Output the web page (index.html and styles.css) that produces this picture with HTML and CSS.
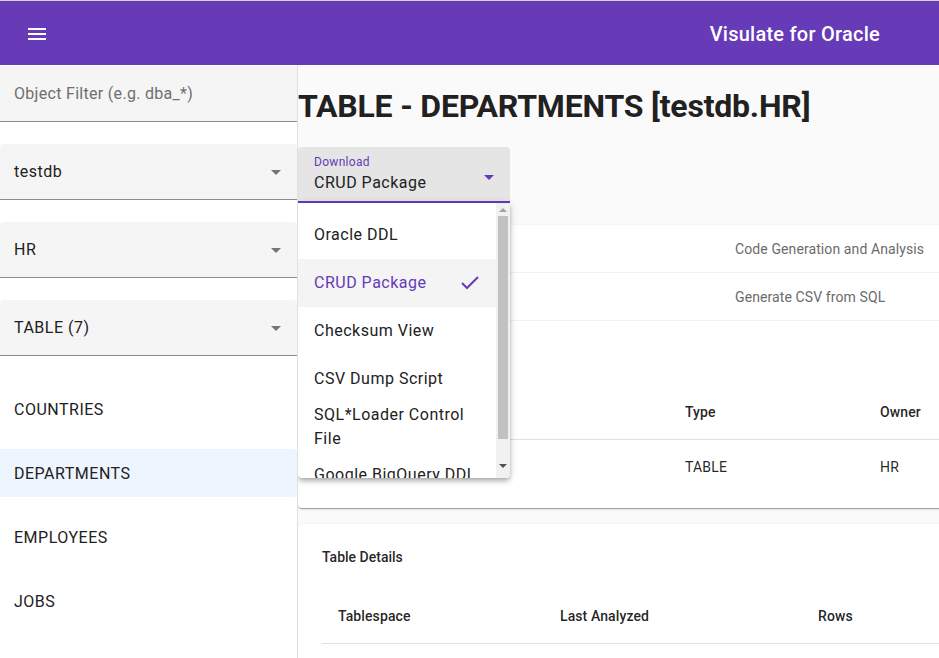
FILE: index.html
```html
<!DOCTYPE html>
<html>
<head>
<meta charset="utf-8">
<link rel="stylesheet" href="styles.css">
</head>
<body>
<div class="app">
  <header class="toolbar">
    <span class="menu-btn">
      <svg width="24" height="24" viewBox="0 0 24 24"><path fill="#fff" d="M3 18h18v-2H3v2zm0-5h18v-2H3v2zm0-7v2h18V6H3z"/></svg>
    </span>
    <span class="spacer"></span>
    <span class="app-title">Visulate for Oracle</span>
  </header>
  <div class="content">
    <aside class="sidebar">
      <div class="filter"><span class="placeholder">Object Filter (e.g. dba_*)</span></div>
      <div class="select"><span>testdb</span><span class="arrow"></span></div>
      <div class="select"><span>HR</span><span class="arrow"></span></div>
      <div class="select"><span>TABLE (7)</span><span class="arrow"></span></div>
      <ul class="nav">
        <li>COUNTRIES</li>
        <li class="active">DEPARTMENTS</li>
        <li>EMPLOYEES</li>
        <li>JOBS</li>
      </ul>
    </aside>
    <main class="main">
      <h1 class="title">TABLE - DEPARTMENTS [testdb.HR]</h1>
      <div class="download">
        <div class="dl-label">Download</div>
        <div class="dl-value"><span>CRUD Package</span><span class="arrow purple"></span></div>
      </div>

      <section class="card card-one">
        <div class="opt-row"><span class="opt-desc">Code Generation and Analysis</span></div>
        <div class="opt-row"><span class="opt-desc">Generate CSV from SQL</span></div>
        <div class="tbl tbl-one">
          <div class="th"></div><div class="th">Type</div><div class="th">Owner</div>
          <div class="td"></div><div class="td">TABLE</div><div class="td">HR</div>
        </div>
      </section>

      <section class="card card-two">
        <div class="card-title">Table Details</div>
        <div class="tbl tbl-two">
          <div class="th">Tablespace</div><div class="th">Last Analyzed</div><div class="th">Rows</div>
        </div>
      </section>

      <div class="panel">
        <ul class="options">
          <li>Oracle DDL</li>
          <li class="selected"><span>CRUD Package</span>
            <svg class="check" width="20" height="16" viewBox="0 0 20 16"><polyline points="2,8 7,13 18,2" fill="none" stroke="#673ab7" stroke-width="2"/></svg>
          </li>
          <li>Checksum View</li>
          <li>CSV Dump Script</li>
          <li class="multi">SQL*Loader Control File</li>
          <li>Google BigQuery DDL</li>
        </ul>
        <div class="scrollbar">
          <span class="sb-up"></span>
          <span class="sb-thumb"></span>
          <span class="sb-down"></span>
        </div>
      </div>
    </main>
  </div>
</div>
</body>
</html>
```

FILE: styles.css
```css
* { box-sizing: border-box; }
html, body { margin: 0; padding: 0; }
body {
  font-family: Roboto, "Noto Sans", sans-serif;
  color: #212121;
  width: 939px;
  height: 658px;
  overflow: hidden;
  border-top: 1px solid #d2d2d2;
  background: #fff;
}
.app { display: flex; flex-direction: column; height: 657px; }
.toolbar {
  height: 64px;
  flex: none;
  background: #673ab7;
  display: flex;
  align-items: center;
  padding: 0 59px 0 26px;
  color: #fff;
}
.menu-btn { display: flex; width: 24px; height: 24px; margin-left: -1px; margin-top: 1px; }
.spacer { flex: 1; }
.app-title { font-size: 20px; font-weight: 500; letter-spacing: 0.25px; margin-top: 2px; }

.content { flex: 1; display: flex; min-height: 0; }
.sidebar {
  width: 298px;
  flex: none;
  border-right: 1px solid #e0e0e0;
  background: #fff;
  padding-top: 1px;
}
.filter {
  height: 56px;
  background: #f5f5f5;
  border-bottom: 1px solid #8c8c8c;
  display: flex;
  align-items: center;
  padding-left: 14px;
}
.placeholder { font-size: 16px; color: #6f6f6f; letter-spacing: 0.3px; }
.select {
  margin-top: 22px;
  height: 56px;
  background: #f5f5f5;
  border-radius: 4px 4px 0 0;
  border-bottom: 1px solid #8c8c8c;
  display: flex;
  align-items: center;
  justify-content: space-between;
  padding: 0 16px 0 14px;
  font-size: 16px;
  letter-spacing: 0.5px;
}
.arrow {
  width: 0; height: 0;
  border-left: 5px solid transparent;
  border-right: 5px solid transparent;
  border-top: 5px solid #757575;
  margin-top: 2px;
}
.arrow.purple { border-top-color: #673ab7; }

.nav { list-style: none; margin: 29px 0 0; padding: 0; display: flex; flex-direction: column; gap: 16px; }
.nav li {
  height: 48px;
  display: flex;
  align-items: center;
  padding-left: 14px;
  font-size: 16px;
  letter-spacing: 0.5px;
  border-radius: 0 4px 4px 0;
}
.nav li.active { background: #edf5fe; }

.main {
  flex: 1;
  position: relative;
  background: #fafafa;
  overflow: hidden;
  min-width: 0;
}
.title {
  margin: 21px 0 0;
  font-size: 32px;
  line-height: 40px;
  font-weight: 700;
  color: #212121;
  white-space: nowrap;
  letter-spacing: -0.2px;
}
.download {
  margin-top: 21px;
  width: 212px;
  height: 56px;
  background: #e5e5e5;
  border-radius: 4px 4px 0 0;
  border-bottom: 2px solid #673ab7;
  padding: 8px 16px 0;
}
.dl-label { font-size: 12px; line-height: 14px; color: #673ab7; letter-spacing: 0.3px; }
.dl-value {
  font-size: 16px;
  line-height: 24px;
  margin-top: 2px;
  display: flex;
  align-items: center;
  justify-content: space-between;
  letter-spacing: 0.5px;
}
.dl-value .arrow { margin-right: 0; margin-top: -12px; }

.card {
  background: #fff;
  border-radius: 4px;
  width: 700px;
  box-shadow: 0 2px 1px -1px rgba(0,0,0,.2), 0 1px 1px 0 rgba(0,0,0,.14), 0 1px 3px 0 rgba(0,0,0,.12);
}
.card-one { margin-top: 22px; padding-bottom: 14px; }
.opt-row {
  height: 48px;
  border-bottom: 1px solid #f2f2f2;
  display: flex;
  align-items: center;
  padding-left: 437px;
}
.opt-desc { font-size: 14px; color: #6b6b6b; letter-spacing: 0.1px; }

.tbl { display: grid; margin: 0 0 0 24px; }
.tbl-one { grid-template-columns: 347px 195px 1fr; margin-top: 63px; }
.tbl-two { grid-template-columns: 222px 258px 1fr; margin-top: 21px; }
.th {
  height: 56px;
  display: flex;
  align-items: center;
  padding-left: 16px;
  font-size: 14px;
  font-weight: 500;
  color: rgba(0,0,0,.87);
  border-bottom: 1px solid #e0e0e0;
  letter-spacing: 0.1px;
}
.td {
  height: 54px;
  display: flex;
  align-items: center;
  padding-left: 16px;
  font-size: 14px;
  color: rgba(0,0,0,.87);
  letter-spacing: 0.2px;
}
.card-two { margin-top: 16px; padding-top: 23px; height: 200px; }
.card-title { padding-left: 24px; font-size: 14px; line-height: 20px; font-weight: 500; color: rgba(0,0,0,.87); }

.panel {
  position: absolute;
  left: 0;
  top: 138px;
  width: 212px;
  height: 275px;
  background: #fff;
  border-radius: 0 0 4px 4px;
  overflow: hidden;
  display: flex;
  box-shadow: 0 2px 4px -1px rgba(0,0,0,.2), 0 4px 5px 0 rgba(0,0,0,.14), 0 1px 10px 0 rgba(0,0,0,.12);
}
.options { list-style: none; margin: 0; padding: 8px 0 0; flex: 1; min-width: 0; }
.options li {
  min-height: 48px;
  display: flex;
  align-items: center;
  justify-content: space-between;
  padding: 0 16px;
  font-size: 16px;
  line-height: 24px;
  color: #212121;
  letter-spacing: 0.5px;
}
.options li.selected { background: #f4f4f4; color: #673ab7; }
.check { margin-right: 0; }
.scrollbar {
  width: 14px;
  flex: none;
  background: #f1f1f1;
  display: flex;
  flex-direction: column;
  align-items: center;
  padding: 5px 0 0;
}
.sb-up {
  width: 0; height: 0;
  border-left: 4px solid transparent;
  border-right: 4px solid transparent;
  border-bottom: 4px solid #a3a3a3;
}
.sb-thumb { width: 10px; height: 223px; background: #c1c1c1; margin-top: 4px; }
.sb-down {
  margin-top: 25px;
  width: 0; height: 0;
  border-left: 4px solid transparent;
  border-right: 4px solid transparent;
  border-top: 4px solid #505050;
}
```
